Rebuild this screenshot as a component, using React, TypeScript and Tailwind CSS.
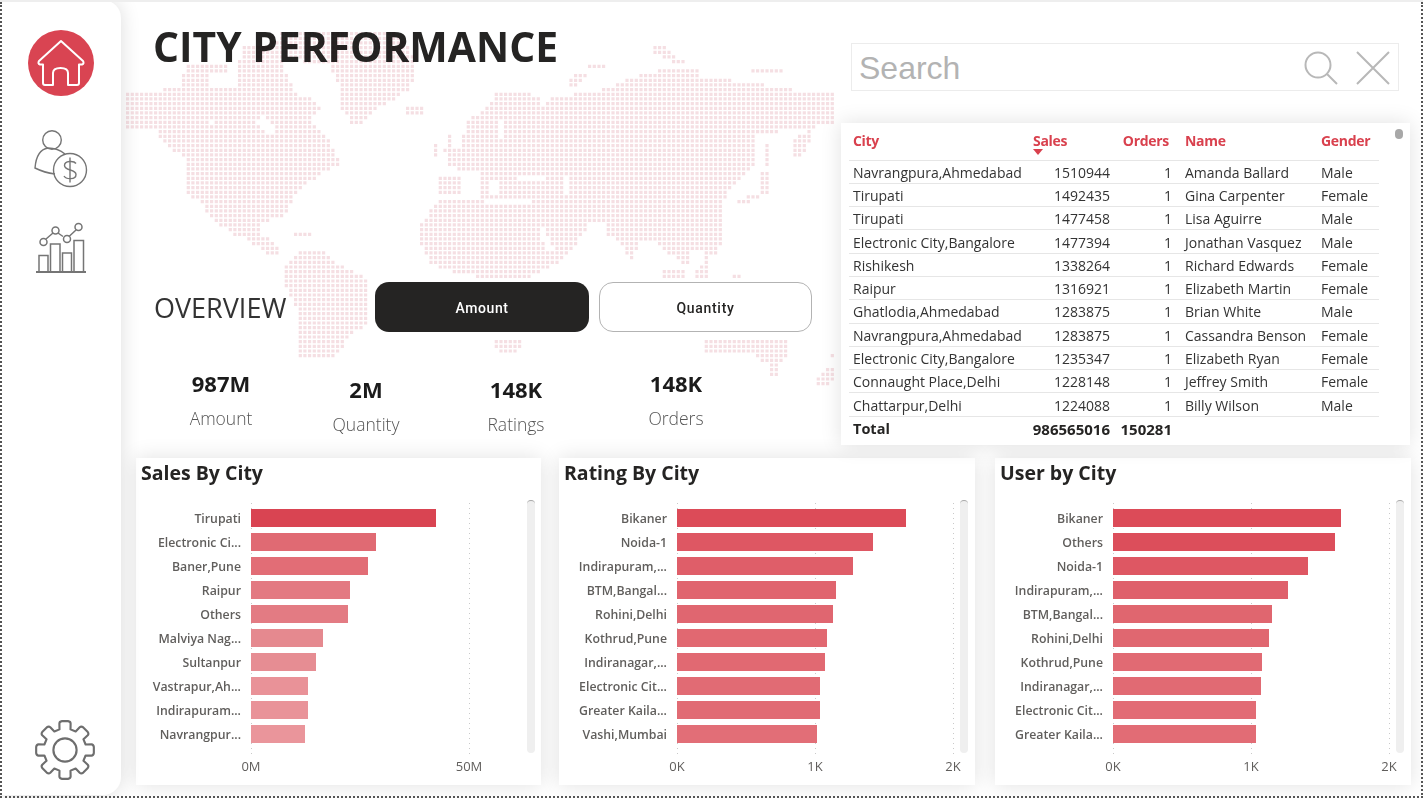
type Pt = [number, number];

// dotted world map: continents as rough outlines in page coords, rasterised on the dot grid
const LAND: Pt[][] = [
  [[280,32],[397,32],[410,50],[417,70],[410,90],[395,98],[375,110],[362,125],[358,128],[350,122],[340,105],[337,78],[330,66],[303,62],[300,58],[243,58],[243,45],[280,42]],
  [[188,62],[228,62],[228,72],[188,72]],
  [[235,60],[285,60],[285,72],[235,72]],
  [[126,93],[155,93],[165,88],[183,87],[183,75],[210,75],[210,88],[237,88],[237,75],[290,75],[292,92],[310,97],[323,108],[308,120],[318,126],[330,142],[337,155],[340,165],[320,175],[305,185],[293,197],[285,215],[262,222],[258,232],[272,240],[285,252],[270,255],[248,240],[230,233],[210,217],[198,200],[188,195],[187,175],[183,157],[172,150],[163,140],[153,128],[126,127]],
  [[293,230],[314,230],[314,236],[293,236]],
  [[287,263],[303,248],[323,252],[343,267],[370,280],[370,323],[350,333],[343,350],[330,358],[300,358],[300,317],[282,280]],
  [[404,107],[425,107],[425,115],[415,118],[404,113]],
  [[432,143],[438,143],[438,155],[432,155]],
  [[447,130],[453,135],[453,153],[444,153]],
  [[437,178],[463,178],[463,193],[437,193]],
  [[452,168],[447,163],[447,153],[462,145],[465,120],[480,112],[483,110],[497,93],[527,93],[542,98],[543,105],[553,98],[587,92],[600,90],[627,80],[647,72],[697,67],[697,77],[733,80],[797,90],[833,93],[833,123],[813,128],[787,130],[755,135],[757,163],[743,177],[727,193],[720,217],[722,245],[712,258],[700,250],[688,252],[690,265],[680,262],[672,255],[650,240],[640,240],[630,263],[618,240],[605,235],[590,222],[572,250],[550,268],[540,272],[530,277],[480,277],[445,270],[430,265],[418,240],[420,225],[437,200],[478,197],[478,172]],
  [[587,64],[608,64],[608,68],[587,68]],
  [[573,72],[590,72],[585,80],[575,90],[568,85]],
  [[653,43],[665,43],[672,55],[687,62],[687,68],[670,60],[653,52]],
  [[750,68],[782,68],[782,73],[750,73]],
  [[793,137],[812,130],[812,142],[800,155],[793,155]],
  [[738,200],[757,192],[760,197],[740,208]],
  [[764,143],[769,143],[769,165],[764,165]],
  [[762,173],[768,173],[768,193],[762,193]],
  [[662,267],[683,267],[683,277],[662,277]],
  [[693,270],[703,262],[708,255],[710,277],[693,277]],
  [[732,272],[743,272],[743,277],[732,277]],
  [[492,340],[523,340],[523,348],[510,355],[498,355]],
  [[703,340],[787,340],[787,353],[782,363],[778,363],[777,377],[770,377],[770,363],[757,360],[757,352],[703,352]],
  [[830,355],[834,355],[834,360],[830,360]],
  [[827,368],[834,366],[834,382],[817,387],[817,380]],
];

const SEA: Pt[][] = [
  [[258,120],[265,116],[272,126],[276,136],[268,136],[258,126]],
  [[497,122],[502,122],[502,138],[497,138]],
  [[483,197],[530,197],[532,202],[483,202]],
  [[491,180],[500,180],[500,196],[491,196]],
  [[519,176],[543,176],[543,181],[519,181]],
  [[564,176],[570,176],[570,194],[564,194]],
  [[536,224],[545,228],[554,250],[548,252]],
  [[588,224],[604,224],[604,232],[598,232]],
  [[207,119],[213,119],[213,123],[207,123]],
];

function inside(p: Pt, poly: Pt[]) {
  let hit = false;
  for (let i = 0, j = poly.length - 1; i < poly.length; j = i++) {
    const [xi, yi] = poly[i];
    const [xj, yj] = poly[j];
    if (yi > p[1] !== yj > p[1] && p[0] < ((xj - xi) * (p[1] - yi)) / (yj - yi) + xi) hit = !hit;
  }
  return hit;
}

function buildDots() {
  let d = "";
  for (let r = 0; r < 76; r++) {
    for (let c = 0; c < 153; c++) {
      const x = 126 + c * 4.667;
      const y = 32 + r * 4.667;
      const p: Pt = [x + 1.5, y + 1.5];
      if (LAND.some((l) => inside(p, l)) && !SEA.some((s) => inside(p, s))) {
        d += `M${x.toFixed(1)} ${y.toFixed(1)}h3.2v3.2h-3.2z`;
      }
    }
  }
  return d;
}

const DOTS = buildDots();

function gearPath() {
  const cx = 31;
  const cy = 31;
  const pts: string[] = [];
  for (let i = 0; i < 8; i++) {
    const a = (-90 + i * 45) * (Math.PI / 180);
    const at = (r: number, off: number) => {
      const t = a + (off * Math.PI) / 180;
      return `${(cx + r * Math.cos(t)).toFixed(1)} ${(cy + r * Math.sin(t)).toFixed(1)}`;
    };
    pts.push(`${i === 0 ? "M" : "L"}${at(22, -15)}`);
    pts.push(`L${at(28, -12)}`);
    pts.push(`Q${at(30, -11)} ${at(30, -6)}`);
    pts.push(`L${at(30, 6)}`);
    pts.push(`Q${at(30, 11)} ${at(28, 12)}`);
    pts.push(`L${at(22, 15)}`);
  }
  return pts.join("") + "Z";
}

function HomeIcon() {
  return (
    <div className="flex h-[66px] w-[66px] items-center justify-center rounded-full bg-[#d94452]">
      <svg width="66" height="66" viewBox="0 0 66 66" fill="none" stroke="white" strokeWidth="2" strokeLinejoin="round" strokeLinecap="round">
        <path d="M33 11 L11 31 Q9.5 33.5 12 34.5 L15 34.5 V53 Q15 55 17 55 H25 V43 Q25 38 32.5 38 Q40 38 40 43 V55 H49 Q51 55 51 53 V34.5 L54 34.5 Q56.5 33.5 55 31 Z" />
      </svg>
    </div>
  );
}

function UserDollarIcon() {
  return (
    <svg width="56" height="60" viewBox="0 0 56 60" fill="none" stroke="#757575" strokeWidth="1.4">
      <circle cx="19" cy="12" r="9.3" />
      <path d="M32 26 C26 21 21 20 15 20 C8 21 3 28 2 40 C8 43 14 45 22 46" />
      <circle cx="37" cy="42" r="16.5" />
      <path d="M43 35.5 C41 32.5 31.5 32.5 31.5 37.5 C31.5 43 43 41 43 46.5 C43 52 33 51.5 31 48" />
      <path d="M37 29.5 V54.5" />
    </svg>
  );
}

function ChartIcon() {
  return (
    <svg width="52" height="52" viewBox="0 0 52 52" fill="none" stroke="#757575" strokeWidth="1.5">
      <path d="M1 50 H51" strokeWidth="1.8" />
      <path d="M4 50 V33.5 H13 V50 M15.5 50 V22 H25 V50 M27.5 50 V31 H36.5 V50 M39 50 V18.5 H48.5 V50" />
      <path d="M11 17 L18 11 M23 11 L28 14.5 M34 14.5 L41 8" />
      <circle cx="8.5" cy="20" r="3.5" />
      <circle cx="20.5" cy="8.5" r="3.5" />
      <circle cx="32" cy="17" r="3.5" />
      <circle cx="43.5" cy="5" r="3.5" />
    </svg>
  );
}

function GearIcon() {
  return (
    <svg width="60" height="60" viewBox="0 0 62 62" fill="none" stroke="#6e6e6e" strokeWidth="2.2" strokeLinejoin="round">
      <path d={gearPath()} />
      <circle cx="31" cy="31" r="12" />
    </svg>
  );
}

const ROWS = [
  ["Navrangpura,Ahmedabad", "1510944", "Amanda Ballard", "Male"],
  ["Tirupati", "1492435", "Gina Carpenter", "Female"],
  ["Tirupati", "1477458", "Lisa Aguirre", "Male"],
  ["Electronic City,Bangalore", "1477394", "Jonathan Vasquez", "Male"],
  ["Rishikesh", "1338264", "Richard Edwards", "Female"],
  ["Raipur", "1316921", "Elizabeth Martin", "Female"],
  ["Ghatlodia,Ahmedabad", "1283875", "Brian White", "Male"],
  ["Navrangpura,Ahmedabad", "1283875", "Cassandra Benson", "Female"],
  ["Electronic City,Bangalore", "1235347", "Elizabeth Ryan", "Female"],
  ["Connaught Place,Delhi", "1228148", "Jeffrey Smith", "Female"],
  ["Chattarpur,Delhi", "1224088", "Billy Wilson", "Male"],
];

function CityTable() {
  return (
    <div className="relative mt-[32px] h-[322px] w-[569px] bg-white pl-[8px] text-[14px] text-[#333333] shadow-[0_0_20px_rgba(0,0,0,0.12)]">
      <div className="absolute right-[7px] top-[6px] h-[10px] w-[8px] rounded-full bg-[#a8a8a8]" />
      <div className="w-[530px]">
        <div className="flex h-[37.5px] items-center border-b border-[#e6e6e6] pb-[2px] font-bold tracking-[-0.3px] text-[#d9414e]">
          <div className="w-[181px] pl-[4px]">City</div>
          <div className="relative w-[84px] pl-[3px]">
            Sales
            <div className="absolute left-[3px] top-[19px] h-0 w-0 border-x-[5px] border-t-[6px] border-x-transparent border-t-[#d9414e]" />
          </div>
          <div className="w-[63px] pr-[8px] text-right">Orders</div>
          <div className="w-[140px] pl-[8px]">Name</div>
          <div className="w-[62px] pl-[4px]">Gender</div>
        </div>
        {ROWS.map((r, i) => (
          <div key={i} className="flex h-[23.3px] items-center border-b border-[#e6e6e6] pt-[1px] last:border-b-2">
            <div className="w-[181px] whitespace-nowrap pl-[4px]">{r[0]}</div>
            <div className="w-[84px] pr-[4px] text-right">{r[1]}</div>
            <div className="w-[63px] pr-[5px] text-right">1</div>
            <div className="w-[140px] whitespace-nowrap pl-[8px]">{r[2]}</div>
            <div className="w-[62px] pl-[4px]">{r[3]}</div>
          </div>
        ))}
        <div className="flex h-[25px] items-center text-[15px] font-bold text-[#252423]">
          <div className="w-[181px] pl-[4px] text-[14.5px]">Total</div>
          <div className="w-[84px] pr-[4px] text-right">986565016</div>
          <div className="w-[63px] pr-[5px] text-right">150281</div>
        </div>
      </div>
    </div>
  );
}

type Bar = [string, number, string];

type ChartProps = {
  title: string;
  width: string;
  axis: number;
  scroll: number;
  bars: Bar[];
  ticks: [string, number][];
};

function BarChart({ title, width, axis, scroll, bars, ticks }: ChartProps) {
  return (
    <div className={`relative h-[327px] bg-white shadow-[0_0_20px_rgba(0,0,0,0.12)] ${width}`}>
      <div className="pl-[5px] pt-[1px] text-[19.5px] font-bold leading-[28px] text-[#252423]">{title}</div>
      {ticks.map(([label, x]) => (
        <div key={label}>
          <svg className="absolute top-[45px]" style={{ left: axis + x }} width="1" height="251">
            <line x1="0.5" y1="0" x2="0.5" y2="251" stroke="#c9c9c9" strokeDasharray="1 4" />
          </svg>
          <div className="absolute top-[299px] w-[40px] -translate-x-1/2 text-center text-[13px] leading-[18px] text-[#605e5c]" style={{ left: axis + x }}>
            {label}
          </div>
        </div>
      ))}
      <div className="relative mt-[19px] flex flex-col">
        {bars.map(([label, w, color]) => (
          <div key={label} className="flex h-[24px] items-center">
            <div className="translate-y-[1px] whitespace-nowrap pr-[10px] text-right text-[12.3px] font-semibold text-[#605e5c]" style={{ width: axis }}>
              {label}
            </div>
            <div className="h-[18px]" style={{ width: w, backgroundColor: color }} />
          </div>
        ))}
      </div>
      <div className="absolute top-[42px] h-[253px] w-[8px] rounded-[4px] border-t border-t-[#a8a8a8] bg-[#efefef]" style={{ left: scroll }} />
    </div>
  );
}

const SALES: Bar[] = [
  ["Tirupati", 185, "#d94452"],
  ["Electronic Ci...", 125, "#e06a73"],
  ["Baner,Pune", 117, "#e26d76"],
  ["Raipur", 99, "#e37a82"],
  ["Others", 97, "#e37b83"],
  ["Malviya Nag...", 72, "#e5898f"],
  ["Sultanpur", 65, "#e68d93"],
  ["Vastrapur,Ah...", 57, "#e99298"],
  ["Indirapuram...", 57, "#e99399"],
  ["Navrangpur...", 54, "#ea959b"],
];

const RATING: Bar[] = [
  ["Bikaner", 229, "#dc4b58"],
  ["Noida-1", 196, "#de5763"],
  ["Indirapuram,...", 176, "#df5e69"],
  ["BTM,Bangal...", 159, "#e0646e"],
  ["Rohini,Delhi", 156, "#e06670"],
  ["Kothrud,Pune", 150, "#e16871"],
  ["Indiranagar,...", 148, "#e16972"],
  ["Electronic Cit...", 143, "#e16b74"],
  ["Greater Kaila...", 143, "#e16b74"],
  ["Vashi,Mumbai", 140, "#e26e77"],
];

const USERS: Bar[] = [
  ["Bikaner", 228, "#dc4b58"],
  ["Others", 222, "#dc4e5b"],
  ["Noida-1", 195, "#de5763"],
  ["Indirapuram,...", 175, "#df606b"],
  ["BTM,Bangal...", 159, "#e0666f"],
  ["Rohini,Delhi", 156, "#e06770"],
  ["Kothrud,Pune", 149, "#e16a73"],
  ["Indiranagar,...", 148, "#e16a73"],
  ["Electronic Cit...", 143, "#e26c75"],
  ["Greater Kaila...", 143, "#e26c75"],
];

function Kpi({ value, label, width, low }: { value: string; label: string; width: string; low?: boolean }) {
  return (
    <div className={`flex flex-col items-center ${width} ${low ? "pt-[6px]" : ""}`}>
      <div className="text-[22px] font-bold leading-[30px] text-[#1b1b1b]">{value}</div>
      <div className="mt-[5px] text-[17.5px] font-light leading-[30px] text-[#555555]">{label}</div>
    </div>
  );
}

export default function App() {
  return (
    <div className="relative flex h-[798px] w-[1423px] overflow-hidden border-t-2 border-[#eeeeee] bg-white font-['Open_Sans',sans-serif]">
      <aside className="relative z-10 flex h-[795px] w-[121px] shrink-0 -translate-y-[2px] flex-col items-center rounded-r-[18px] bg-white pb-[15px] pt-[30px] shadow-[0_0_20px_rgba(0,0,0,0.14)]">
        <HomeIcon />
        <div className="ml-[1px] mt-[32px]">
          <UserDollarIcon />
        </div>
        <div className="mt-[34px]">
          <ChartIcon />
        </div>
        <div className="ml-[8px] mt-auto">
          <GearIcon />
        </div>
      </aside>

      <main className="flex w-[1302px] flex-col">
        <div className="flex h-[456px]">
          <section className="w-[720px]">
            <h1 className="pl-[32px] pt-[18px] text-[40.8px] font-bold leading-[52px] text-[#252423]">CITY PERFORMANCE</h1>
            <div className="mt-[210px] flex items-center pl-[33px]">
              <div className="w-[221px] translate-y-[1px] text-[27px] leading-[50px] text-[#333333]">OVERVIEW</div>
              <button className="h-[50px] w-[214px] rounded-[14px] bg-[#252423] pt-[2px] font-['Roboto',sans-serif] text-[14px] font-medium tracking-[0.6px] text-white">
                Amount
              </button>
              <button className="ml-[10px] h-[50px] w-[213px] rounded-[14px] border border-[#b3b3b3] bg-white pt-[2px] font-['Roboto',sans-serif] text-[14px] font-medium tracking-[0.7px] text-[#252423]">
                Quantity
              </button>
            </div>
            <div className="ml-[35px] mt-[36px] flex items-start">
              <Kpi value="987M" label="Amount" width="w-[130px]" />
              <Kpi value="2M" label="Quantity" width="w-[160px]" low />
              <Kpi value="148K" label="Ratings" width="w-[140px]" low />
              <Kpi value="148K" label="Orders" width="w-[180px]" />
            </div>
          </section>

          <section className="relative z-10">
            <div className="ml-[10px] mt-[41px] flex h-[48px] w-[548px] items-center border border-[#ececec] bg-white pl-[7px] pr-[8px]">
              <div className="flex-1 pt-[1px] font-['Liberation_Sans',sans-serif] text-[32px] text-[#b3b3b3]">Search</div>
              <svg className="mt-[1px]" width="34" height="34" viewBox="0 0 34 34" fill="none" stroke="#b8b8b8" strokeWidth="2">
                <circle cx="14" cy="14" r="12.5" />
                <path d="M23 23 L33 33" />
              </svg>
              <svg className="ml-[18px] mt-[1px]" width="34" height="34" viewBox="0 0 34 34" fill="none" stroke="#b8b8b8" strokeWidth="2">
                <path d="M1 1 L33 33 M33 1 L1 33" />
              </svg>
            </div>
            <CityTable />
          </section>
        </div>

        <div className="ml-[15px] flex">
          <BarChart title="Sales By City" width="w-[405px]" axis={115} scroll={391} bars={SALES} ticks={[["0M", 0], ["50M", 218]]} />
          <div className="ml-[18px]">
            <BarChart title="Rating By City" width="w-[416px]" axis={118} scroll={401} bars={RATING} ticks={[["0K", 0], ["1K", 138], ["2K", 276]]} />
          </div>
          <div className="ml-[20px]">
            <BarChart title="User by City" width="w-[416px]" axis={118} scroll={401} bars={USERS} ticks={[["0K", 0], ["1K", 138], ["2K", 276]]} />
          </div>
        </div>
      </main>

      {/* map sits on top of the title so the dots show through the letters */}
      <svg className="pointer-events-none absolute left-0 top-[-2px] mix-blend-multiply" width="1423" height="420" viewBox="0 0 1423 420">
        <path d={DOTS} fill="#f5dfe3" />
      </svg>

      <div className="pointer-events-none absolute inset-0 z-20 border-x-2 border-b-2 border-dotted border-x-[#555555] border-b-[#555555]" />
    </div>
  );
}
